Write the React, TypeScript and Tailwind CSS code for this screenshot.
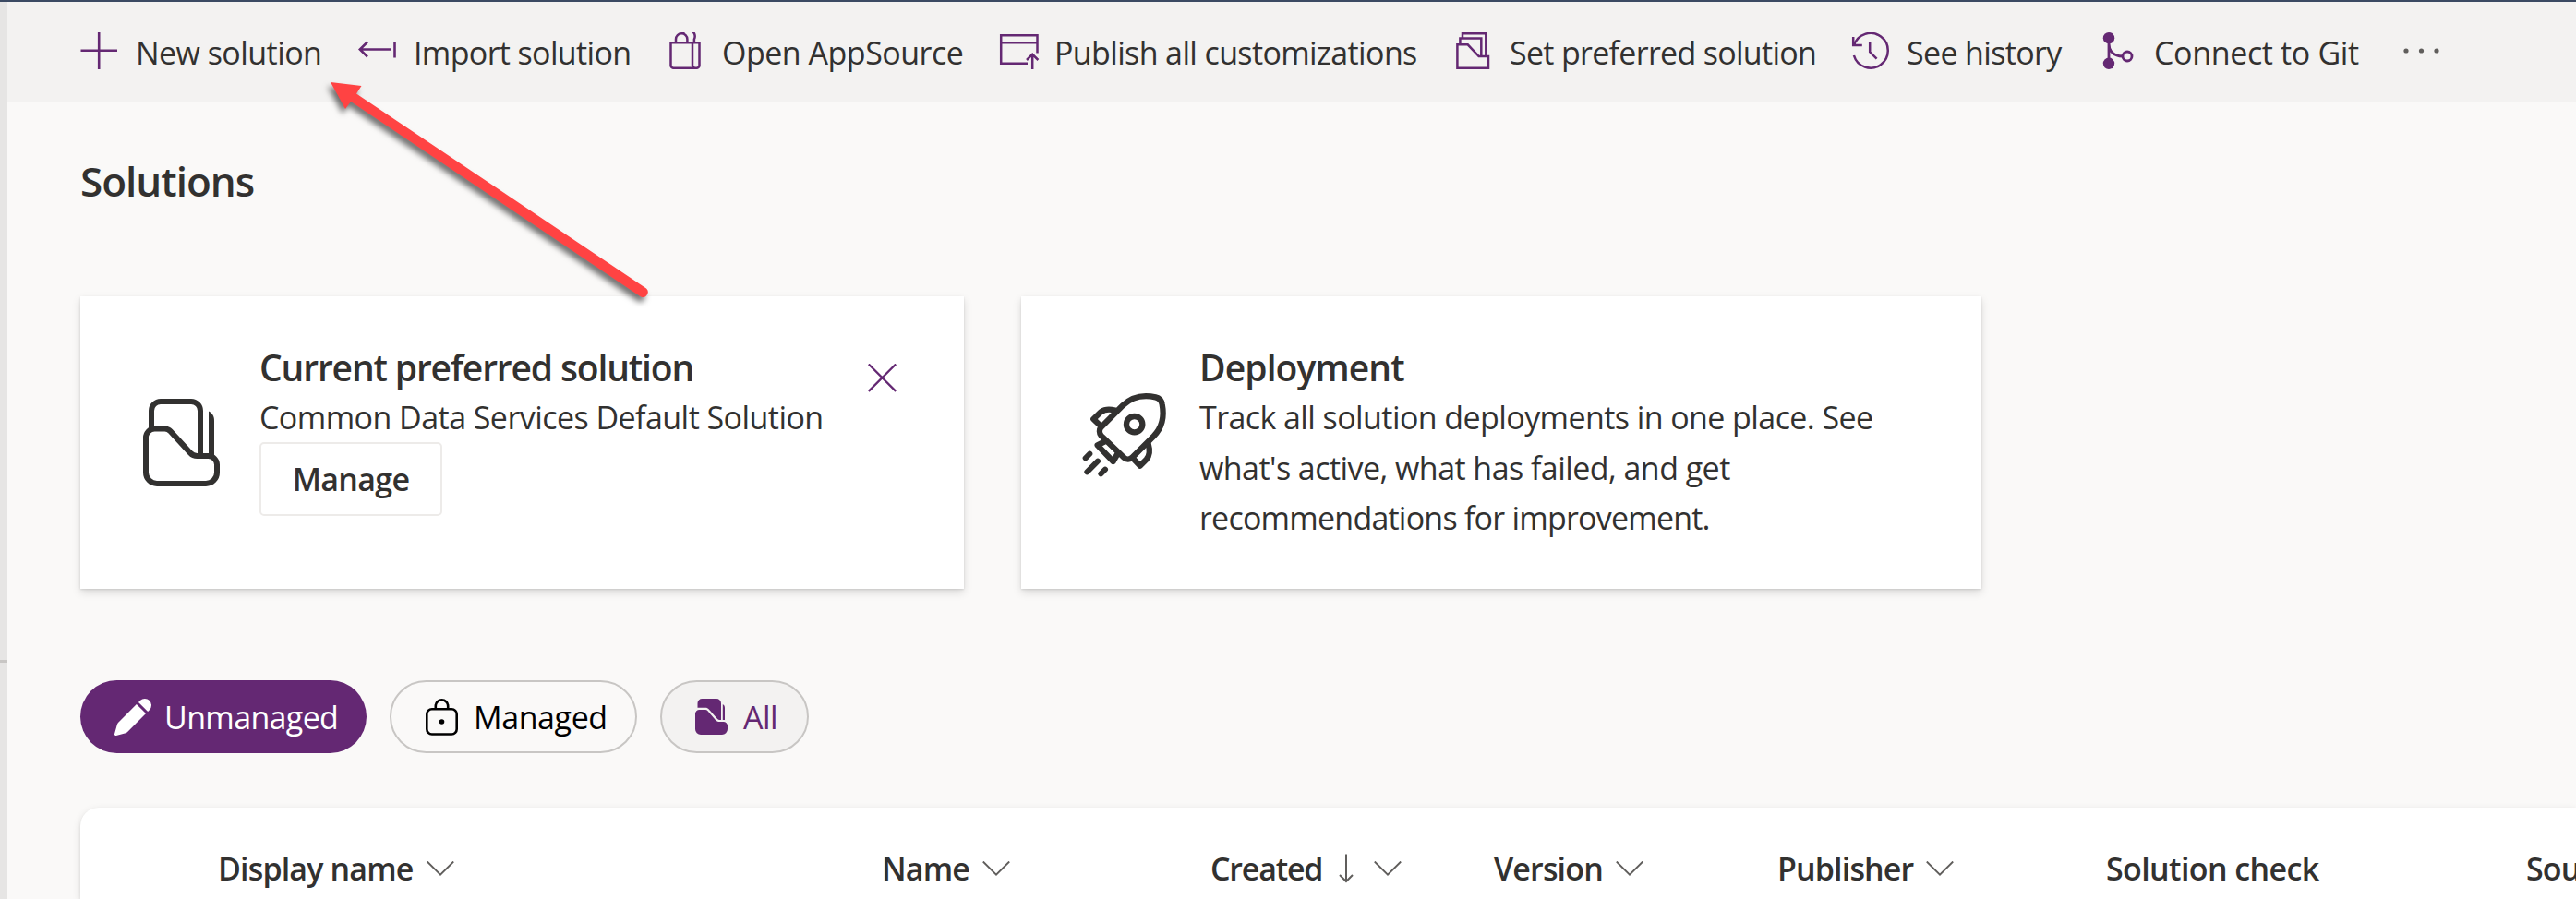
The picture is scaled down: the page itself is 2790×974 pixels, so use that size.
import type { ReactNode } from "react";

const P = "#642873";

function PlusIcon() {
  return (
    <svg width="40" height="40" viewBox="0 0 40 40" fill="none" stroke={P} strokeWidth="2.6">
      <path d="M0.5 19.7h40M20.2 0v40" />
    </svg>
  );
}

function ImportIcon() {
  return (
    <svg width="42" height="40" viewBox="0 0 42 40" fill="none" stroke={P} strokeWidth="2.6">
      <path d="M1.5 18.5H35M10 10.5l-8.2 8 8.2 8M39.5 10v17.5" />
    </svg>
  );
}

function BagIcon() {
  return (
    <svg width="40" height="40" viewBox="0 0 40 40" fill="none" stroke={P} strokeWidth="2.5">
      <path d="M4.500 11.200h31v24.600a3 3 0 0 1-3 3H7.500a3 3 0 0 1-3-3zM28 11.200v24.600a3 3 0 0 0 3 3" />
      <path d="M10 11V7.500a6.200 6.200 0 0 1 12.400 0V11M17.500 1.200a6.200 6.200 0 0 1 12.400 6.300V11" />
    </svg>
  );
}

function PublishIcon() {
  return (
    <svg width="44" height="40" viewBox="0 0 44 40" fill="none" stroke={P} strokeWidth="2.5">
      <path d="M31 33.800H2.200V3.300h39.300V22.500M2.200 11.300h39.300M36.200 40V24.500M30 30l6.200-6.200 6.200 6.200" />
    </svg>
  );
}

function PreferredIcon() {
  return (
    <svg width="40" height="40" viewBox="0 0 40 40" fill="none" stroke={P} strokeWidth="2.5">
      <path d="M3.400 13.300h11.300l12 12.800H37v12.600H3.400zM6.400 13V6.400h22.900V26M9 6V1.300h25.300V26" />
    </svg>
  );
}

function HistoryIcon() {
  return (
    <svg width="42" height="40" viewBox="0 0 42 40" fill="none" stroke={P} strokeWidth="2.5">
      <path d="M3 14.200A18.800 18.800 0 1 1 2.900 25M2.200 5v9h9.600M20.200 10v11.300l7.400 7.400" />
    </svg>
  );
}

function GitIcon() {
  return (
    <svg width="40" height="40" viewBox="0 0 40 40" fill="none" stroke={P} strokeWidth="2.800">
      <circle cx="11" cy="6.200" r="6.200" fill={P} stroke="none" />
      <circle cx="11" cy="33.800" r="6.200" fill={P} stroke="none" />
      <circle cx="31" cy="26" r="5" />
      <path d="M11 6v28M11 12c0 8 5 14 15 14" />
    </svg>
  );
}

function Command({ icon, label, className }: { icon: ReactNode; label: string; className: string }) {
  return (
    <button className={`flex shrink-0 items-center whitespace-nowrap ${className}`}>
      <span className="flex w-[60px] shrink-0">{icon}</span>
      <span className="mt-[4px]">{label}</span>
    </button>
  );
}

function Chevron() {
  return (
    <svg className="ml-[14px] shrink-0" width="30" height="17" viewBox="0 0 30 17" fill="none" stroke="#605e5c" strokeWidth="1.900">
      <path d="M0.800 0.500l14.200 14.200L29.200 0.500" />
    </svg>
  );
}

function FolderIcon() {
  return (
    <svg width="84" height="96" viewBox="0 0 84 96" fill="none" stroke="#323130" strokeWidth="6">
      <path d="M9 34V13A10 10 0 0 1 19 3h33a10 10 0 0 1 10 10v49" />
      <path d="M3 42a9.500 9.500 0 0 1 9.500-9.500h11c2.500 0 4.500 1 6 2.600L51 58.600c2 2.200 4.500 3.400 7.500 3.400h12a9.500 9.500 0 0 1 9.500 9.500V80a12 12 0 0 1-12 12H15A12 12 0 0 1 3 80z" />
      <path d="M71 13.500c3.800 1.800 6 5.500 6 10V62h-6z" fill="#323130" stroke="none" />
    </svg>
  );
}

function RocketIcon() {
  return (
    <svg width="120" height="120" viewBox="0 0 360 360" fill="none" stroke="#323130" strokeWidth="19" strokeLinejoin="round" strokeLinecap="round">
      <path d="M98 158L168 88C200 57 235 52 275 61C288 64 294 71 296 84C304 125 296 160 268 188L200 256C191 265 180 265 172 257L98 186C91 177 91 166 98 158Z" />
      <circle cx="206" cy="149" r="26" />
      <path d="M143 104C122 98 108 101 97 109L73 132L98 156" />
      <path d="M251 213C259 240 252 255 245 263L224 284L204 263" />
      <path d="M108 206L86 217L137 270L150 247" />
      <path d="M61 245L47 259M87 269L52 304M111 296L97 310" strokeWidth="18" />
    </svg>
  );
}

function PencilIcon() {
  return (
    <svg width="40" height="40" viewBox="2 2 20 20" fill="#fff">
      <path d="M13.940 5L19 10.060 9.060 20a2.250 2.250 0 0 1-1 .58l-5.110 1.400a.75.75 0 0 1-.92-.93l1.400-5.110a2.250 2.250 0 0 1 .57-1zM20.950 3.050a3.580 3.580 0 0 1 0 5.060l-.89.890L15 3.940l.890-.890a3.580 3.580 0 0 1 5.060 0z" />
    </svg>
  );
}

function LockIcon() {
  return (
    <svg width="35" height="40" viewBox="0 0 35 40" fill="none" stroke="#000" strokeWidth="2.600">
      <rect x="1.300" y="11.300" width="32.400" height="27.200" rx="5.500" />
      <path d="M10.800 11V8a6.700 6.700 0 0 1 13.400 0v3" />
      <circle cx="17.500" cy="25" r="2.800" fill="#000" stroke="none" />
    </svg>
  );
}

function AllIcon() {
  return (
    <svg width="35" height="39" viewBox="0 0 35 39" fill={P}>
      <path d="M2.500 9.700V5a5 5 0 0 1 5-5H23a5 5 0 0 1 5 5v18h-1.500c-1 0-1.900-.4-2.600-1.200L14.800 11.500c-1-1.200-2.200-1.800-3.800-1.800z" />
      <path d="M0 16.500a4.500 4.500 0 0 1 4.500-4.500H11c.9 0 1.700.4 2.300 1.100l8.800 10.100c1 1.200 2.400 1.800 4 1.800h4.400a4.500 4.500 0 0 1 4.500 4.500V33a6 6 0 0 1-6 6H6a6 6 0 0 1-6-6z" />
      <path d="M29.800 6c1.400.8 2.200 2.200 2.200 3.800V23h-2.200z" />
    </svg>
  );
}

const cardShadow = "shadow-[0_4px_9px_rgba(0,0,0,0.13),0_1px_2px_rgba(0,0,0,0.11)]";

export default function App() {
  return (
    <div className="relative flex h-[974px] w-full overflow-hidden bg-[#faf9f8] font-['Open_Sans','Noto_Sans',sans-serif] text-[34px] leading-[54px] tracking-[-0.55px] text-[#323130]">
      <div className="w-[8px] shrink-0 bg-[#e6e5e4] pt-[715px]">
        <div className="h-[3px] bg-[#c8c6c4]" />
      </div>
      <div className="flex min-w-0 flex-1 flex-col">
        <header className="flex h-[111px] shrink-0 bg-[#f3f2f1] pl-[79px] pb-[1px]">
          <Command icon={<PlusIcon />} label="New solution" className="w-[301px]" />
          <Command icon={<ImportIcon />} label="Import solution" className="w-[334px] tracking-[-0.65px]" />
          <Command icon={<BagIcon />} label="Open AppSource" className="w-[360px] tracking-[-0.5px]" />
          <Command icon={<PublishIcon />} label="Publish all customizations" className="w-[493px] tracking-[-0.63px]" />
          <Command icon={<PreferredIcon />} label="Set preferred solution" className="w-[430px] tracking-[-0.7px]" />
          <Command icon={<HistoryIcon />} label="See history" className="w-[268px] tracking-[-0.65px]" />
          <Command icon={<GitIcon />} label="Connect to Git" className="w-[329px] tracking-[-0.35px]" />
          <button className="flex items-center">
            <svg width="44" height="8" viewBox="0 0 44 8" fill="#605e5c">
              <circle cx="4" cy="4" r="2.600" />
              <circle cx="20.500" cy="4" r="2.600" />
              <circle cx="37" cy="4" r="2.600" />
            </svg>
          </button>
        </header>

        <main className="flex flex-1 flex-col pl-[79px] pt-[55px]">
          <h1 className="text-[44px] leading-[60px] font-semibold tracking-[-1px]">Solutions</h1>

          <section className="mt-[95px] flex gap-[62px]">
            <article className={`flex h-[317px] w-[957px] bg-white ${cardShadow}`}>
              <div className="w-[194px] shrink-0 pt-[111px] pl-[68px]">
                <FolderIcon />
              </div>
              <div className="flex flex-1 flex-col items-start pt-[50px] whitespace-nowrap">
                <h2 className="text-[39px] leading-[54px] font-semibold tracking-[-1.150px]">Current preferred solution</h2>
                <p>Common Data Services Default Solution</p>
                <button className="flex h-[80px] w-[198px] items-center justify-center rounded-[5px] border-2 border-[#edebe9] font-semibold tracking-[-0.7px]">
                  Manage
                </button>
              </div>
              <button className="mt-[73px] mr-[73px] flex h-[31px] w-[31px] shrink-0">
                <svg width="31" height="31" viewBox="0 0 31 31" stroke={P} strokeWidth="2.300">
                  <path d="M0.800 0.500l29.400 29.400M30.200 0.500L0.800 29.900" />
                </svg>
              </button>
            </article>
            <article className={`flex h-[317px] w-[1040px] bg-white ${cardShadow}`}>
              <div className="w-[193px] shrink-0 pt-[89px] pl-[54px]">
                <RocketIcon />
              </div>
              <div className="flex-1 pt-[50px] whitespace-nowrap">
                <h2 className="text-[39px] leading-[54px] font-semibold tracking-[-0.900px]">Deployment</h2>
                <p className="leading-[54.5px]">
                  <span className="tracking-[-0.580px]">Track all solution deployments in one place. See</span>
                  <br />
                  what's active, what has failed, and get
                  <br />
                  <span className="tracking-[-0.780px]">recommendations for improvement.</span>
                </p>
              </div>
            </article>
          </section>

          <section className="mt-[99px] flex h-[79px] gap-[25px]">
            <button className="flex w-[310px] items-center rounded-full bg-[#642873] pl-[37px] text-white">
              <PencilIcon />
              <span className="ml-[14px] tracking-[-0.650px]">Unmanaged</span>
            </button>
            <button className="flex w-[268px] items-center rounded-full border-2 border-[#c8c6c4] pl-[37px] text-black">
              <LockIcon />
              <span className="ml-[17px] tracking-[-0.400px]">Managed</span>
            </button>
            <button className="flex w-[161px] items-center rounded-full border-2 border-[#c8c6c4] bg-[#f3f2f1] pl-[36px] text-[#642873]">
              <AllIcon />
              <span className="ml-[17px]">All</span>
            </button>
          </section>

          <section className="mt-[59px] flex flex-1 rounded-tl-[20px] bg-white pt-[39px] pl-[149px] font-semibold tracking-[-0.85px] whitespace-nowrap shadow-[0_3px_8px_rgba(0,0,0,0.13),0_1px_2px_rgba(0,0,0,0.08)]">
            <div className="flex h-[54px] w-[719px] shrink-0 items-center">Display name<Chevron /></div>
            <div className="flex h-[54px] w-[356px] shrink-0 items-center">Name<Chevron /></div>
            <div className="flex h-[54px] w-[307px] shrink-0 items-center tracking-[-1.200px]">
              Created
              <svg className="ml-[18px] shrink-0" width="16" height="32" viewBox="0 0 16 32" fill="none" stroke="#605e5c" strokeWidth="2">
                <path d="M8 0.500v29M1 23l7 7 7-7" />
              </svg>
              <span className="ml-[8px] flex"><Chevron /></span>
            </div>
            <div className="flex h-[54px] w-[307px] shrink-0 items-center">Version<Chevron /></div>
            <div className="flex h-[54px] w-[356px] shrink-0 items-center">Publisher<Chevron /></div>
            <div className="flex h-[54px] w-[455px] shrink-0 items-center tracking-[-0.600px]">Solution check</div>
            <div className="flex h-[54px] shrink-0 items-center">Sou</div>
          </section>
        </main>
      </div>

      <div className="absolute top-0 left-0 h-[2px] w-full bg-[#3b4a63]" />
      <svg className="absolute top-[80px] left-[340px] drop-shadow-[-3px_5px_3px_rgba(0,0,0,0.55)]" width="380" height="260" viewBox="340 80 380 260">
        <path d="M358 89L391.500 93L386 101.500L700 312.500A5.500 5.500 0 0 1 694 321.500L380 110L374 118Z" fill="#ff4343" />
      </svg>
    </div>
  );
}
